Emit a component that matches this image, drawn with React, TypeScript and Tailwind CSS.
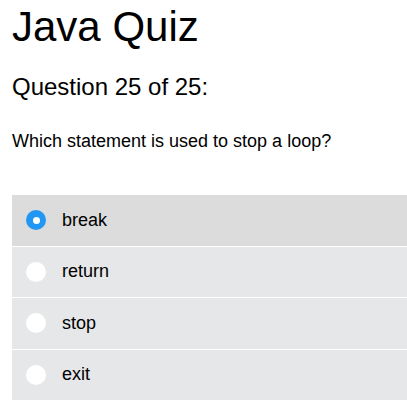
import { useState } from "react";

const options = ["break", "return", "stop", "exit"];

export default function App() {
    const [selected, setSelected] = useState("break");

    return (
        <div className="min-h-screen bg-white text-black font-['Liberation_Sans',Arial,sans-serif]">
            <div className="pl-3 pt-[3px]">
                <h1 className="text-[42px] leading-[normal]">Java Quiz</h1>
                <h2 className="text-[24px] leading-[normal] mt-[22px]">Question 25 of 25:</h2>
                <p className="text-[18px] leading-[normal] mt-[30px]">Which statement is used to stop a loop?</p>
            </div>

            <div className="ml-3 mt-[43px] flex flex-col">
                {options.map((opt) => {
                    const isSelected = selected === opt;
                    return (
                        <label
                            key={opt}
                            onClick={() => setSelected(opt)}
                            className={`flex items-center gap-4 pl-[14px] py-[14.75px] border-b border-white text-[18px] leading-[normal] cursor-pointer ${
                                isSelected ? "bg-[#dcdcdc]" : "bg-[#e6e7e9]"
                            }`}
                        >
                            <span
                                className={`w-5 h-5 rounded-full flex items-center justify-center ${
                                    isSelected ? "bg-[#2196f3]" : "bg-white"
                                }`}
                            >
                                {isSelected && <span className="w-[7px] h-[7px] rounded-full bg-white" />}
                            </span>
                            <span>{opt}</span>
                        </label>
                    );
                })}
            </div>
        </div>
    );
}
